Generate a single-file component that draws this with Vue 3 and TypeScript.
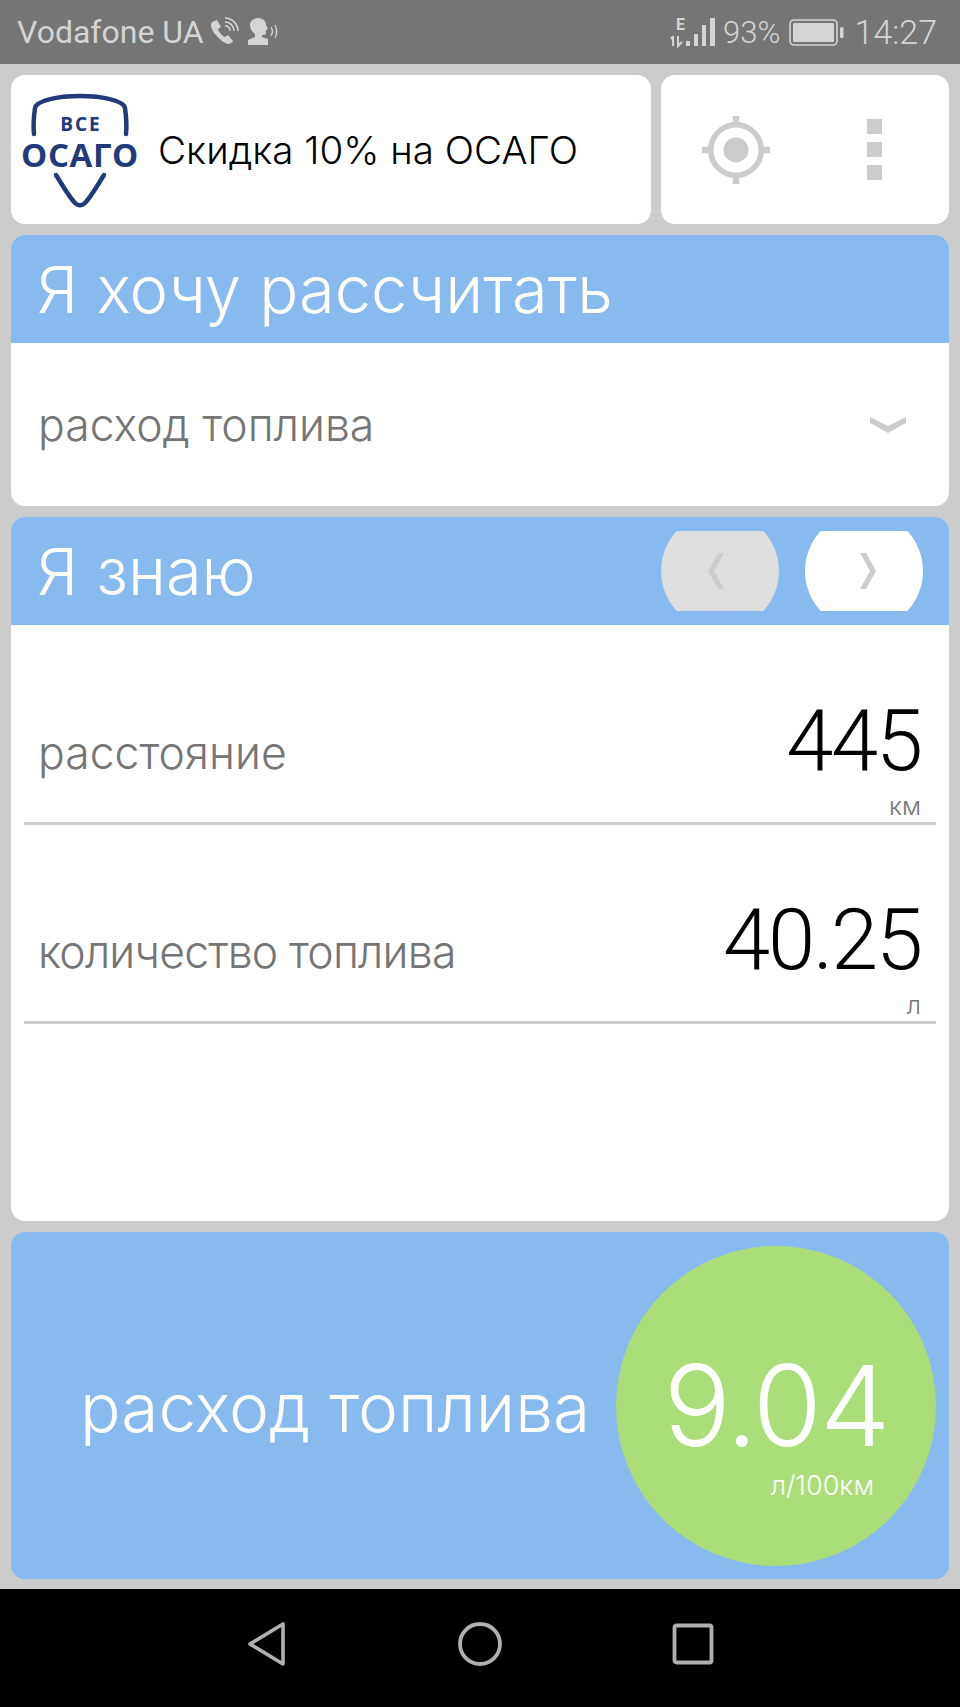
<template>
  <div class="screen">
    <!-- Android status bar -->
    <header class="status-bar">
      <span class="carrier">Vodafone UA</span>
      <svg class="st-icon" width="30" height="30" viewBox="0 0 30 30">
        <path d="M3 5c-2 3-1 7 3 12s9 9 13 10c2 0 4-1 5-3l-5-6-3 2c-3-1-6-5-7-8l3-2-4-7z" fill="#d4d4d4" />
        <path d="M16 9c3 0 5 2 5 5M16 5c5 0 9 4 9 9M16 1c7 0 13 6 13 13" fill="none" stroke="#d4d4d4" stroke-width="1.5" />
      </svg>
      <svg class="st-icon st-voice" width="32" height="30" viewBox="0 0 32 30">
        <path d="M11 1c5 0 8 3 8 7l2 4-2 1v3c0 2-2 2-4 2v2l6 2v6H1v-5l7-3v-3C5 15 3 12 3 8c0-4 4-7 8-7z" fill="#d4d4d4" />
        <path d="M24 10c2 3 2 6 0 9M28 8c2 4 2 9 0 13" fill="none" stroke="#d4d4d4" stroke-width="1.3" />
      </svg>
      <span class="spacer"></span>
      <svg class="st-signal" width="47" height="30" viewBox="0 0 47 30">
        <text x="6" y="13" class="st-e">E</text>
        <path d="M3 19v10M1 22l2-3M8 19v10l4-4" fill="none" stroke="#d4d4d4" stroke-width="2" />
        <rect x="16" y="24" width="4" height="5" fill="#d4d4d4" />
        <rect x="24" y="17" width="4" height="12" fill="#d4d4d4" />
        <rect x="32" y="8" width="4" height="21" fill="#d4d4d4" />
        <rect x="40" y="1" width="5" height="28" fill="#d4d4d4" />
      </svg>
      <span class="battery-pct">93%</span>
      <svg class="st-battery" width="55" height="27" viewBox="0 0 55 27">
        <rect x="1" y="1" width="47" height="25" rx="4" fill="none" stroke="#d4d4d4" stroke-width="1.6" />
        <rect x="4" y="4" width="41" height="19" rx="1.5" fill="#d4d4d4" />
        <rect x="51" y="8" width="3.5" height="11" rx="1.5" fill="#d4d4d4" />
      </svg>
      <span class="clock">14:27</span>
    </header>

    <main class="content">
      <div class="top-row">
        <div class="card ad">
          <svg class="logo" width="118" height="118" viewBox="0 0 118 118">
            <path d="M13 43C12 33 13 24 14 17 15 10 36 5 59 5s44 5 45 12c1 7 2 16 1 26" fill="none" stroke="#22397a" stroke-width="4.5" stroke-linecap="round" />
            <path d="M35 84c7 11 13 22 19 28 3 3 7 3 10 0 6-6 12-17 19-28" fill="none" stroke="#22397a" stroke-width="4.5" stroke-linecap="round" />
            <text x="60" y="40" text-anchor="middle" class="logo-top">ВСЕ</text>
            <text x="59" y="76" text-anchor="middle" class="logo-main">ОСАГО</text>
          </svg>
          <span class="ad-text">Скидка 10% на ОСАГО</span>
        </div>
        <div class="card tools">
          <svg class="locate" width="70" height="70" viewBox="0 0 70 70">
            <circle cx="35" cy="35" r="25.3" fill="none" stroke="#cccccc" stroke-width="5.6" />
            <circle cx="35" cy="35" r="12.5" fill="#cccccc" />
            <path d="M35 1v10M35 59v10M1 35h10M59 35h10" stroke="#cccccc" stroke-width="6.5" />
          </svg>
          <div class="dots">
            <i></i><i></i><i></i>
          </div>
        </div>
      </div>

      <section class="card select-card">
        <h2 class="section-head">Я хочу рассчитать</h2>
        <div class="select-row">
          <span class="label">расход топлива</span>
          <svg width="36" height="16" viewBox="0 0 36 16">
            <path d="M0 0l18 9 18-9v6L18 16 0 6z" fill="#cccccc" />
          </svg>
        </div>
      </section>

      <section class="card known-card">
        <div class="section-head known-head">
          <h2 class="known-title">Я знаю</h2>
          <div class="pager">
            <button class="page-btn page-btn--off">
              <svg width="16" height="36" viewBox="0 0 16 36"><path d="M10 0h6L6 18l10 18h-6L0 18z" fill="#cccccc" /></svg>
            </button>
            <button class="page-btn page-btn--next">
              <svg width="16" height="36" viewBox="0 0 16 36"><path d="M6 0H0l10 18L0 36h6l10-18z" fill="#cccccc" /></svg>
            </button>
          </div>
        </div>
        <div class="fields">
          <div class="field" v-for="f in fields" :key="f.label">
            <span class="label" :class="{ 'label--tight': f.tight }">{{ f.label }}</span>
            <div class="field-value">
              <span class="value">{{ f.value }}</span>
              <span class="unit">{{ f.unit }}</span>
            </div>
          </div>
        </div>
      </section>

      <section class="result">
        <span class="result-label">расход топлива</span>
        <div class="result-circle">
          <span class="result-value">9.04</span>
          <span class="result-unit">л/100км</span>
        </div>
      </section>
    </main>

    <!-- Android nav bar -->
    <nav class="nav-bar">
      <svg width="44" height="46" viewBox="0 0 44 46">
        <path d="M5 23L38 3v40z" fill="none" stroke="#b0b0b0" stroke-width="3.6" stroke-linejoin="round" />
      </svg>
      <svg width="46" height="46" viewBox="0 0 46 46">
        <circle cx="23" cy="23" r="20" fill="none" stroke="#b0b0b0" stroke-width="3.8" />
      </svg>
      <svg width="44" height="44" viewBox="0 0 44 44">
        <rect x="3.5" y="3.5" width="37" height="37" rx="2" fill="none" stroke="#b0b0b0" stroke-width="3.8" />
      </svg>
    </nav>
  </div>
</template>

<script setup lang="ts">
interface Field {
  label: string;
  value: string;
  unit: string;
  tight?: boolean;
}

const fields: Field[] = [
  { label: "расстояние", value: "445", unit: "км" },
  { label: "количество топлива", value: "40.25", unit: "л", tight: true },
];
</script>

<style>
html,
body {
  margin: 0;
  background: #cccccc;
}
</style>

<style scoped>
.screen {
  width: 960px;
  height: 1707px;
  display: flex;
  flex-direction: column;
  background: #cccccc;
  font-family: "Inter", "Liberation Sans", sans-serif;
  font-weight: 300;
  overflow: hidden;
}

/* ── Status bar ─────────────────────────────────────────── */
.status-bar {
  height: 64px;
  flex-shrink: 0;
  display: flex;
  align-items: center;
  padding: 0 23px 0 17px;
  background: #757575;
  color: #d4d4d4;
  font-family: "Roboto", sans-serif;
  font-weight: 400;
}

.carrier {
  font-size: 32px;
}

.st-icon {
  margin-left: 5px;
}

.st-voice {
  margin-left: 8px;
}

.spacer {
  flex: 1;
}

.st-signal {
  overflow: visible;
}

.st-e {
  font-size: 16px;
  font-weight: 700;
  fill: #d4d4d4;
}

.battery-pct {
  margin-left: 6px;
  font-size: 31px;
  font-weight: 300;
}

.st-battery {
  margin-left: 9px;
}

.clock {
  margin-left: 10px;
  font-size: 34px;
  font-weight: 300;
}

/* ── Cards ──────────────────────────────────────────────── */
.content {
  flex: 1;
  display: flex;
  flex-direction: column;
  gap: 11px;
  padding: 11px 11px 10px;
  min-height: 0;
}

.card {
  background: #ffffff;
  border-radius: 14px;
  overflow: hidden;
}

.top-row {
  display: flex;
  gap: 10px;
  height: 149px;
}

.ad {
  width: 640px;
  display: flex;
  align-items: center;
  gap: 19px;
  padding-left: 10px;
  box-sizing: border-box;
}

.logo {
  flex-shrink: 0;
}

.logo-top {
  font: 700 19px "Open Sans", sans-serif;
  letter-spacing: 2px;
  fill: #22397a;
}

.logo-main {
  font: 700 33px "Open Sans", sans-serif;
  letter-spacing: 0.6px;
  fill: #22397a;
}

.ad-text {
  font-size: 38.6px;
  color: #000000;
  white-space: nowrap;
}

.tools {
  flex: 1;
  display: flex;
  align-items: center;
  padding-left: 40px;
}

.dots {
  margin-left: 96px;
  display: flex;
  flex-direction: column;
  gap: 8px;
}

.dots i {
  display: block;
  width: 15px;
  height: 15px;
  background: #cccccc;
}

.section-head {
  margin: 0;
  height: 108px;
  padding-left: 26px;
  display: flex;
  align-items: center;
  background: #87baef;
  color: #ffffff;
  font-size: 65px;
  font-weight: 300;
}

.select-card {
  height: 271px;
}

.select-row {
  height: 163px;
  display: flex;
  align-items: center;
  justify-content: space-between;
  padding: 0 43px 0 27px;
  box-sizing: border-box;
}

.label {
  font-size: 44.5px;
  color: #757575;
  white-space: nowrap;
}

/* ── Known values ───────────────────────────────────────── */
.known-card {
  flex: 1;
}

.known-head {
  justify-content: space-between;
  padding-right: 26px;
}

.known-title {
  margin: 0;
  font: inherit;
}

.pager {
  display: flex;
  gap: 26px;
}

.page-btn {
  width: 118px;
  height: 80px;
  padding: 0;
  border: 0;
  display: flex;
  align-items: center;
  justify-content: center;
  background: #ffffff;
  clip-path: circle(59px at center);
}

.page-btn--off {
  padding-right: 8px;
  background: #dedede;
}

.page-btn--next {
  padding-left: 8px;
}

.fields {
  padding-top: 1px;
}

.field {
  height: 199px;
  box-sizing: border-box;
  margin: 0 13px;
  padding: 0 15px 0 14px;
  display: flex;
  align-items: flex-end;
  justify-content: space-between;
  border-bottom: 3px solid #cccccc;
}

.field-value {
  display: flex;
  flex-direction: column;
  align-items: flex-end;
}

.value {
  font-family: "Roboto", sans-serif;
  font-size: 85px;
  line-height: 90px;
  letter-spacing: -2.2px;
  margin-bottom: 6px;
  color: #000000;
}

.unit {
  font-size: 25px;
  line-height: 28px;
  padding-bottom: 2px;
  color: #757575;
}

.field .label {
  margin-bottom: 42px;
}

.field .label--tight {
  letter-spacing: -0.8px;
}

/* ── Result ─────────────────────────────────────────────── */
.result {
  height: 347px;
  flex-shrink: 0;
  padding: 4px 13px 0 69px;
  box-sizing: border-box;
  display: flex;
  align-items: center;
  justify-content: space-between;
  background: #87baef;
  border-radius: 14px;
  color: #ffffff;
}

.result-label {
  font-size: 67.5px;
  white-space: nowrap;
}

.result-circle {
  width: 320px;
  height: 320px;
  margin-top: -4px;
  padding-top: 46px;
  box-sizing: border-box;
  border-radius: 50%;
  background: #abde78;
  display: flex;
  flex-direction: column;
  align-items: center;
  justify-content: center;
}

.result-value {
  font-size: 112px;
  line-height: 100px;
  letter-spacing: -2px;
}

.result-unit {
  align-self: flex-end;
  margin-top: 14px;
  margin-right: 62px;
  font-size: 27px;
}

/* ── Nav bar ────────────────────────────────────────────── */
.nav-bar {
  height: 118px;
  flex-shrink: 0;
  display: flex;
  align-items: center;
  justify-content: center;
  gap: 168px;
  padding-bottom: 8px;
  box-sizing: border-box;
  background: #000000;
}
</style>
